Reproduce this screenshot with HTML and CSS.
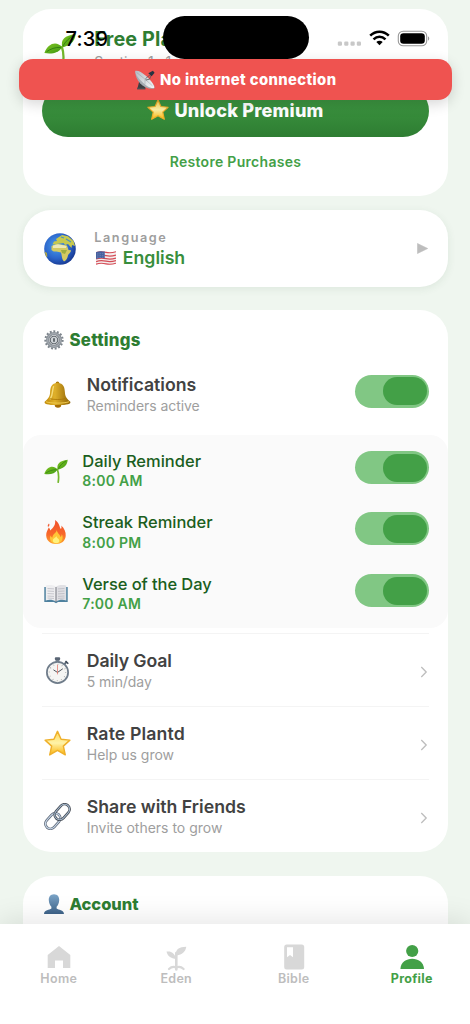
FILE: index.html
```html
<!DOCTYPE html>
<html lang="en">
<head>
<meta charset="utf-8">
<title>Profile</title>
<link rel="stylesheet" href="styles.css">
</head>
<body>
<svg class="defs" width="0" height="0" aria-hidden="true">
  <defs>
    <linearGradient id="gLeaf" x1="0" y1="0" x2="1" y2="1"><stop offset="0" stop-color="#80c41f"/><stop offset="1" stop-color="#3f9a17"/></linearGradient>
    <linearGradient id="gStar" x1="0" y1="0" x2="0" y2="1"><stop offset="0" stop-color="#ffd95a"/><stop offset=".5" stop-color="#fff3a8"/><stop offset="1" stop-color="#fbb40c"/></linearGradient>
    <linearGradient id="gBell" x1="0" y1="0" x2="1" y2="0"><stop offset="0" stop-color="#c08a08"/><stop offset=".4" stop-color="#dfb02a"/><stop offset="1" stop-color="#8f6204"/></linearGradient>
    <linearGradient id="gBust" x1="0" y1="0" x2="0" y2="1"><stop offset="0" stop-color="#7ca5c8"/><stop offset="1" stop-color="#3d6288"/></linearGradient>
    <radialGradient id="gSea" cx=".4" cy=".4" r=".65"><stop offset="0" stop-color="#4aa0ec"/><stop offset=".6" stop-color="#2c66cc"/><stop offset="1" stop-color="#17378f"/></radialGradient>
    <linearGradient id="gFire" x1="0" y1="0" x2="0" y2="1"><stop offset="0" stop-color="#f0502c"/><stop offset=".6" stop-color="#f8682a"/><stop offset="1" stop-color="#ffa52e"/></linearGradient>
    <linearGradient id="gDish" x1="0" y1="0" x2="1" y2="1"><stop offset="0" stop-color="#b5bcc3"/><stop offset="1" stop-color="#f4f6f7"/></linearGradient>
    <symbol id="sprout" viewBox="0 0 24 24">
      <path d="M14.2 23.2C15 18 14.6 13.8 13.4 10.500" fill="none" stroke="#74b72c" stroke-width="1.7" stroke-linecap="round"/>
      <path d="M13.700 10.800C12.300 4.800 15.500 2 23.700 .8C23.200 7.500 18.500 9.500 13.700 10.800Z" fill="url(#gLeaf)"/>
      <path d="M13.500 10.600C9.500 5.600 2.800 7.600 .3 15C5.800 16 11 15 13.500 10.600Z" fill="url(#gLeaf)"/>
      <path d="M14.200 9.800C16 6.500 19 3.500 22 2M12.600 10.800C8.500 10.500 4.800 12 2 14" fill="none" stroke="#317d12" stroke-width=".7"/>
    </symbol>
    <symbol id="star" viewBox="0 0 24 24">
      <path d="M12 1.200L15.200 8.200L23 9L17.200 14.300L18.900 22.100L12 18.200L5.100 22.100L6.800 14.300L1 9L8.800 8.200Z" fill="url(#gStar)" stroke="#efb02a" stroke-width="1.300" stroke-linejoin="round"/>
    </symbol>
    <symbol id="dish" viewBox="0 0 24 24">
      <path d="M5.500 12L3 22H12.500L10.500 15Z" fill="#3b3e42"/>
      <path d="M2.500 22.300H12.500" stroke="#4b4e52" stroke-width="2"/>
      <path d="M.6 1C-1 9 8 23.500 22.500 22.500C24 21.500 23.500 19.500 22.500 18Z" fill="#a5acb2"/>
      <path d="M.6 1C3.500 .2 8 2.500 13 6.800C19 12 23.500 18 23 21.300C19 22.800 13 18.500 8.500 14C3 8.800 -.5 3.300 .6 1Z" fill="url(#gDish)"/>
      <path d="M2 3L12 11L21 19M12 11L12 17" fill="none" stroke="#8b9298" stroke-width=".5"/>
      <path d="M12.500 10.500L19.500 4.500M13 12L17.500 11L19.500 6" fill="none" stroke="#4b5157" stroke-width=".9"/>
      <path d="M16 3.800L21.500 .8L23.500 3.200L20 7.500Z" fill="#263341"/>
    </symbol>
    <symbol id="globe" viewBox="0 0 32 32">
      <circle cx="16" cy="16" r="15.800" fill="url(#gSea)"/>
      <path d="M8.500 11.500L10 8.500L13 8L12 6L15 4L18 2L24 3.200L29.500 8L31 13L28 12L27.500 15L24 11L21 12L19.500 10L16 10.500Z" fill="#c7c94d"/>
      <path d="M7.500 13L12 11L17 11.500L23 12.500L24.500 17L27 17.300C27 20 23.800 21.200 23.800 23C23.500 25.500 21.500 28.500 19.800 28.300C17.600 26 18 22.500 17 19.500C14.600 18.200 10 19.800 7.500 17Z" fill="#d4ca62"/>
      <path d="M9 12.500L14 11.300L22.500 13L22 15L9 15Z" fill="#ece8b7"/>
      <path d="M17 17L23 17L21 21L18 20Z" fill="#9eae40"/>
      <path d="M.6 18.500L3 20L3.300 24L2 23.500Z" fill="#b3a844"/>
      <path d="M17 4L20 5M22 6L27 9" stroke="#4c93bd" stroke-width="1.300"/>
    </symbol>
    <symbol id="flag" viewBox="0 0 20 14">
      <path d="M0 1.200C4 -.3 7 .1 10 .8S16 1.500 20 .2V12.500C16 13.800 13 13.500 10 12.800S4 12.200 0 13.800Z" fill="#f4eeee"/>
      <path d="M0 1.700C4 .2 7 .6 10 1.300S16 2 20 .7M0 5C4 3.500 7 3.900 10 4.600S16 5.300 20 4M0 8C4 6.500 7 6.900 10 7.600S16 8.300 20 7M0 10.600C4 9.100 7 9.500 10 10.200S16 10.900 20 9.600M0 13.200C4 11.700 7 12.100 10 12.800S16 13.500 20 12.200" fill="none" stroke="#d44b55" stroke-width="1.200"/>
      <path d="M0 1.200C4 -.3 6 .1 8.800 .6V7.400C6 6.800 3 6.800 0 8Z" fill="#46609f"/>
      <path d="M1 3L8.500 2.200M1 5L8.500 4.200M1 6.800L8.500 6" stroke="#aab6d6" stroke-width=".5" stroke-dasharray=".7 1"/>
    </symbol>
    <symbol id="gear" viewBox="0 0 24 24">
      <circle cx="12" cy="12" r="10.300" fill="none" stroke="#7d858c" stroke-width="2.600" stroke-dasharray="2.300 2.014"/>
      <circle cx="12" cy="12" r="7.600" fill="none" stroke="#8b9299" stroke-width="4"/>
      <circle cx="12" cy="12" r="7.700" fill="none" stroke="#afb5ba" stroke-width="1"/>
      <circle cx="12" cy="12" r="4.500" fill="#cfd4d8" stroke="#61686e" stroke-width="1.400"/>
      <path d="M12 10.500V13.500" stroke="#50575d" stroke-width="2" stroke-linecap="round"/>
    </symbol>
    <symbol id="bell" viewBox="0 0 28 28">
      <circle cx="14" cy="2.400" r="1.900" fill="#b07c08"/>
      <ellipse cx="14.500" cy="25" rx="3.400" ry="2.800" fill="#a66d06"/>
      <path d="M14 2.200C20.500 2.200 21.400 7 21.700 12C22 17 24 18.500 27.300 21.500C28 23.600 25 25 14 25S0 23.600 .7 21.500C4 18.500 6 17 6.300 12C6.600 7 7.500 2.200 14 2.200Z" fill="url(#gBell)"/>
      <path d="M9.800 6C8.600 9 9.300 14.500 6.600 18.500" fill="none" stroke="#f5db78" stroke-width="1.500" stroke-linecap="round"/>
      <path d="M2 21.500C7 23.400 21 23.400 26 21.500" fill="none" stroke="#f0cc50" stroke-width="1"/>
      <path d="M6 18.300C10 19.500 18 19.500 22 18.300" fill="none" stroke="#a67305" stroke-width=".8"/>
    </symbol>
    <symbol id="fire" viewBox="0 0 20 24">
      <path d="M9 0C14 3 13 7 15 9C15.800 7.800 15.500 6.500 15.200 5.500C18.500 8.500 20 12 19.700 16C19.300 21 15.500 24 10 24S.5 21 .2 15.500C0 12 2 9.500 2.800 7.500C3.800 8.500 4 9.500 4.300 10.500C7.500 7.500 10 4.500 9 0Z" fill="url(#gFire)"/>
      <path d="M3 3.500C4 5 3.200 6 2 7C1.300 5.500 2 4.500 3 3.500Z" fill="#f25b34"/>
      <path d="M11 9.500C10.500 13 14 14 14.500 17C15.500 16.500 15.800 15 15.700 14C18 18 16 23.300 10.500 23.500C5 23.500 3 19.500 4.500 15.500C5 17 5.800 17.500 6.500 17.500C6.500 14 10.500 13 11 9.500Z" fill="#ffc637"/>
      <path d="M10.500 16C10.500 18.500 13.500 18.500 13.300 21C13 24 7 24 6.800 20.800C6.700 18.500 9.500 18 10.500 16Z" fill="#fff17c"/>
    </symbol>
    <symbol id="book" viewBox="0 0 24 20">
      <path d="M.3 3H23.700V18H14L12 19.300L10 18H.3Z" fill="#4e819f"/>
      <path d="M1.800 1.500C6 .6 10 1 12 3V17.500C9 15.600 5 15.500 1.800 16.400Z" fill="#eeeef0"/>
      <path d="M22.200 1.500C18 .6 14 1 12 3V17.500C15 15.600 19 15.500 22.200 16.400Z" fill="#e0e0e4"/>
      <path d="M12 3V18" stroke="#777981" stroke-width="1"/>
      <path d="M3.500 4.500L10 4.900M3.500 7L10 7.400M3.500 9.500L10 9.900M3.500 12L10 12.400M3.500 14L10 14.400M14 4.900L20.500 4.500M14 7.400L20.500 7M14 9.900L20.500 9.500M14 12.400L20.500 12M14 14.400L20.500 14" stroke="#b4b5bd" stroke-width=".7"/>
    </symbol>
    <symbol id="watch" viewBox="0 0 24 28">
      <rect x="10" y="1.200" width="4" height="5" fill="#7c8793"/>
      <rect x="9.200" y=".3" width="5.600" height="3" rx="1.200" fill="#596574"/>
      <path d="M19 7.500L21.700 5" stroke="#5f6b78" stroke-width="2"/>
      <path d="M20.300 4.200L23.200 7" stroke="#3f4b59" stroke-width="1.600"/>
      <circle cx="12" cy="16" r="11" fill="#f5f5f3" stroke="#6f7c8a" stroke-width="1.800"/>
      <circle cx="12" cy="16" r="8.500" fill="none" stroke="#888" stroke-width="1.200" stroke-dasharray=".6 3.850"/>
      <path d="M12 16L7.800 13.300M12 16L17.500 12.200" stroke="#394047" stroke-width=".9"/>
      <path d="M12 18V8" stroke="#e6776b" stroke-width=".8"/>
    </symbol>
    <symbol id="link" viewBox="0 0 28 28">
      <g fill="none">
        <g transform="rotate(-48 9.200 18.700)">
          <rect x=".2" y="13.500" width="18" height="10.400" rx="5.200" stroke="#566070" stroke-width="2.700"/>
          <rect x=".2" y="13.500" width="18" height="10.400" rx="5.200" stroke="#c4d3e4" stroke-width="1.300"/>
        </g>
        <g transform="rotate(-48 18.800 9.300)">
          <rect x="9.800" y="4.100" width="18" height="10.400" rx="5.200" stroke="#40464f" stroke-width="2.700"/>
          <rect x="9.800" y="4.100" width="18" height="10.400" rx="5.200" stroke="#a4b8cc" stroke-width="1.100"/>
        </g>
      </g>
    </symbol>
    <symbol id="bust" viewBox="0 0 20 20">
      <path d="M10 .2C13.700 .2 15.400 3 15.200 6.200C15 9.400 13.800 11.500 12.600 12.700V14.500C14.500 16.200 19.800 15.500 20 20H0C.2 15.500 5.500 16.200 7.400 14.500V12.700C6.200 11.500 5 9.400 4.800 6.200C4.600 3 6.300 .2 10 .2Z" fill="url(#gBust)"/>
    </symbol>
    <symbol id="chevron" viewBox="0 0 8 12"><path d="M1.300 1L6.200 6L1.300 11" fill="none" stroke="#bdbdbd" stroke-width="1.300"/></symbol>
  </defs>
</svg>

<div class="screen">
  <main class="content">
    <section class="card plan">
      <div class="plan-head">
        <svg class="plan-icon"><use href="#sprout"/></svg>
        <div>
          <div class="plan-name">Free Plan</div>
          <div class="plan-sub">Section 1 · 1</div>
        </div>
      </div>
      <div class="unlock"><svg class="e22"><use href="#star"/></svg><span>Unlock Premium</span></div>
      <div class="restore">Restore Purchases</div>
    </section>

    <section class="card language">
      <svg class="e32"><use href="#globe"/></svg>
      <div class="lang-text">
        <div class="lang-label">Language</div>
        <div class="lang-value"><svg class="flag"><use href="#flag"/></svg><span>English</span></div>
      </div>
      <svg class="play" viewBox="0 0 11 11"><path d="M.5 .5V10.500L10.700 5.500Z" fill="#bdbdbd" stroke="#bdbdbd" stroke-width=".6" stroke-linejoin="round"/></svg>
    </section>

    <section class="card settings">
      <h2 class="title wide"><svg class="e20"><use href="#gear"/></svg><span>Settings</span></h2>
      <div class="row first">
        <svg class="e27"><use href="#bell"/></svg>
        <div class="text"><div class="name">Notifications</div><div class="desc tight">Reminders active</div></div>
        <div class="toggle"></div>
      </div>
      <div class="reminders">
        <div class="reminder">
          <svg class="e24"><use href="#sprout"/></svg>
          <div class="text"><div class="rname">Daily Reminder</div><div class="rtime">8:00 AM</div></div>
          <div class="toggle"></div>
        </div>
        <div class="reminder">
          <svg class="e24"><use href="#fire"/></svg>
          <div class="text"><div class="rname">Streak Reminder</div><div class="rtime">8:00 PM</div></div>
          <div class="toggle"></div>
        </div>
        <div class="reminder">
          <svg class="e24"><use href="#book"/></svg>
          <div class="text"><div class="rname verse">Verse of the Day</div><div class="rtime">7:00 AM</div></div>
          <div class="toggle"></div>
        </div>
      </div>
      <div class="row">
        <svg class="e27"><use href="#watch"/></svg>
        <div class="text"><div class="name goal">Daily Goal</div><div class="desc tight">5 min/day</div></div>
        <svg class="chev"><use href="#chevron"/></svg>
      </div>
      <div class="row">
        <svg class="e27"><use href="#star"/></svg>
        <div class="text"><div class="name rate">Rate Plantd</div><div class="desc">Help us grow</div></div>
        <svg class="chev"><use href="#chevron"/></svg>
      </div>
      <div class="row">
        <svg class="e27"><use href="#link"/></svg>
        <div class="text"><div class="name">Share with Friends</div><div class="desc">Invite others to grow</div></div>
        <svg class="chev"><use href="#chevron"/></svg>
      </div>
    </section>

    <section class="card account">
      <h2 class="title"><svg class="e20"><use href="#bust"/></svg><span>Account</span></h2>
    </section>
  </main>

  <header class="status">
    <span class="time">7:39</span>
    <div class="island"></div>
    <svg class="signals" viewBox="0 0 94 18">
      <g fill="#c8c8c8"><rect x=".8" y="11.500" width="4.200" height="4.200" rx="1.200"/><rect x="7.200" y="11.500" width="4.200" height="4.200" rx="1.200"/><rect x="13.500" y="11.500" width="4.200" height="4.200" rx="1.200"/><rect x="19.800" y="11.500" width="4.200" height="4.200" rx="1.200"/></g>
      <g fill="none" stroke="#000" stroke-width="2.500"><path d="M33.200 5.700C38.500 .5 46.500 .5 51.800 5.700"/><path d="M36.500 9.400C40.200 5.900 44.800 5.900 48.500 9.400"/></g>
      <path d="M42.500 15.200L39.300 12C41.200 10.400 43.800 10.400 45.700 12Z"/>
      <rect x="61.300" y="1.300" width="28.400" height="14.400" rx="4.800" fill="#fff" stroke="#999" stroke-width="1.100"/>
      <rect x="63.200" y="3.200" width="24.600" height="10.600" rx="3.300"/>
      <path d="M91 6.300C92.700 7 92.700 10 91 10.700Z" fill="#999"/>
    </svg>
  </header>
  <div class="banner"><svg class="dish"><use href="#dish"/></svg><span>No internet connection</span></div>

  <nav class="tabs">
    <div class="tab"><svg class="ticon" viewBox="0 0 28 28"><path d="M14 2L25.300 11V24H18V16.500H10V24H2.700V11Z" fill="#d8d8d8"/></svg><span>Home</span></div>
    <div class="tab"><svg class="ticon" viewBox="0 0 28 28"><g fill="#d8d8d8"><path d="M13.500 12C13.500 5 17 2.800 24.300 2.700C23.500 8 20 10.500 14.800 11.500Z"/><path d="M14.500 15C12 8.500 9 6.700 4.500 7.600C5.500 12 8.500 14.700 14.500 15Z"/></g><path d="M14.300 9V25.500" fill="none" stroke="#d8d8d8" stroke-width="2.600" stroke-linecap="round"/><path d="M7 25C9.500 22.500 12 22.500 14.300 23.500C16.500 22.500 19 22.500 21.600 25" fill="none" stroke="#d8d8d8" stroke-width="2.200" stroke-linecap="round"/></svg><span>Eden</span></div>
    <div class="tab"><svg class="ticon" viewBox="0 0 28 28"><rect x="4.200" y=".6" width="20" height="25" rx="2.500" fill="#d8d8d8"/><path d="M7 3.200H13V13.200L10 11L7 13.200Z" fill="#fff"/></svg><span>Bible</span></div>
    <div class="tab active"><svg class="ticon" viewBox="0 0 28 28"><circle cx="14.200" cy="7" r="6.100" fill="#43a047"/><path d="M2.400 25.100C2.700 11.200 25.700 11.200 26 25.100Z" fill="#43a047"/></svg><span>Profile</span></div>
  </nav>
</div>
</body>
</html>
```

FILE: styles.css
```css
* { box-sizing: border-box; }
body { margin: 0; background: #eff6ef; font-family: Inter, sans-serif; }
.defs { position: absolute; }
svg { display: block; flex: none; }

.screen { position: relative; width: 470px; height: 1024px; overflow: hidden; background: #eff6ef; }
.content { display: flex; flex-direction: column; padding: 9px 22.300px 0 23.300px; }
.card { background: #fff; border-radius: 28px; padding: 0 19px; flex: none; }

.plan { height: 187px; padding-top: 13px; display: flex; flex-direction: column; }
.plan-head { display: flex; height: 54px; padding-top: 3px; flex: none; }
.plan-icon { width: 32px; height: 32px; margin: 8px 18px 0 2px; }
.plan-name { font-size: 19.800px; font-weight: 700; line-height: 24px; color: #2e7d32; margin-top: 1.700px; letter-spacing: .15px; }
.plan-sub { font-size: 14px; line-height: 18px; color: #9e9e9e; margin-top: 2px; }
.unlock { height: 52px; margin-top: 9px; border-radius: 27px; background: linear-gradient(#43a047, #388e3c 50%, #2e7d32); display: flex; align-items: center; justify-content: center; gap: 5px; color: #fff; font-size: 18.100px; font-weight: 800; letter-spacing: .2px; flex: none; padding-bottom: 3px; }
.e22 { width: 22px; height: 22px; }
.restore { margin-top: 15px; text-align: center; font-size: 14px; line-height: 20px; font-weight: 600; color: #43a047; letter-spacing: .3px; }

.language { height: 77px; margin-top: 14px; display: flex; align-items: center; padding-left: 20.800px; box-shadow: 0 2px 9px rgba(46, 90, 50, .09); }
.e32 { width: 32px; height: 32px; }
.lang-text { flex: 1; margin-left: 18.200px; padding-top: 2.500px; }
.lang-label { font-size: 12.700px; font-weight: 600; line-height: 16px; letter-spacing: 1.550px; color: #9e9e9e; }
.lang-value { display: flex; align-items: center; gap: 6.500px; font-size: 17.700px; font-weight: 600; line-height: 24px; color: #388e3c; }
.flag { width: 20px; height: 14px; margin-left: 2px; }
.play { width: 11px; height: 11px; margin-right: 1px; }

.settings { height: 542px; margin-top: 23.300px; }
.title { margin: 0; padding: 17.500px 0 0 1.700px; height: 40px; display: flex; align-items: center; gap: 5.500px; font-size: 16.500px; line-height: 20px; font-weight: 800; color: #2e7d32; letter-spacing: -.05px; }
.title.wide { font-size: 16.800px; letter-spacing: .25px; padding-top: 18.500px; }
.e20 { width: 20px; height: 20px; }
.row { display: flex; align-items: center; height: 73px; border-top: 1.500px solid #f4f4f4; }
.row.first { border: 0; height: 80px; margin-top: 4.500px; padding-bottom: 7px; }
.row .text { padding-top: 2px; }
.first .text { padding-top: 7px; }
.e27 { width: 27px; height: 27px; margin-left: 1.700px; margin-top: 2px; }
.first .e27 { margin-top: 6px; }
.text { flex: 1; margin-left: 15.800px; }
.name { font-size: 17.700px; line-height: 22px; font-weight: 600; color: #424242; }
.name.goal { letter-spacing: -.12px; }
.name.rate { letter-spacing: .12px; }
.desc { font-size: 14px; line-height: 19px; color: #9e9e9e; }
.desc.tight { letter-spacing: -.06px; }
.toggle { width: 74px; height: 33px; border-radius: 17px; background: #81c784; padding: 2px 2px; display: flex; justify-content: flex-end; }
.toggle::before { content: ""; width: 44px; height: 28px; border-radius: 14px; background: #43a047; }
.reminder .toggle { padding-top: 3px; }
.reminders { margin: 0 -19px 4.500px; background: #fafafa; border-radius: 18px; padding: 2px 19px 7px; height: 193.500px; }
.reminder { display: flex; align-items: center; height: 61.400px; }
.e24 { width: 24px; height: 24px; margin-left: 1.700px; }
.reminder .text { margin-left: 14.300px; padding-top: 6px; }
.reminder .e24 { margin-top: 7px; }
.rname { font-size: 16.500px; line-height: 20.500px; font-weight: 500; color: #1b5e20; }
.rname.verse { letter-spacing: -.08px; }
.rtime { font-size: 14px; line-height: 19px; font-weight: 600; color: #43a047; letter-spacing: .25px; }
.chev { width: 8px; height: 12px; margin-right: 1px; margin-top: 4px; }

.account { height: 160px; margin-top: 23.300px; }

.status { position: absolute; inset: 0 0 auto 0; height: 60px; }
.time { position: absolute; left: 65.500px; top: 26.500px; font-size: 20px; line-height: 24px; font-weight: 500; color: #000; letter-spacing: .2px; }
.island { position: absolute; left: 162.500px; top: 16px; width: 146.500px; height: 43px; border-radius: 22px; background: #000; }
.signals { position: absolute; left: 336.500px; top: 29.500px; width: 94px; height: 18px; }

.banner { position: absolute; left: 19px; top: 58.500px; width: 433px; height: 41.500px; border-radius: 14px; background: #ef5350; box-shadow: 0 4px 14px rgba(0, 0, 0, .16); display: flex; align-items: center; justify-content: center; gap: 5.500px; color: #fff; font-size: 14.800px; font-weight: 800; letter-spacing: .38px; padding-top: 1.500px; }
.dish { width: 20px; height: 20px; }

.tabs { position: absolute; left: 0; bottom: 0; width: 470px; height: 100px; background: #fff; display: flex; padding: 0 0; box-shadow: 0 -4px 26px rgba(0, 0, 0, .1); }
.tab { width: 117.800px; padding-top: 19.500px; display: flex; flex-direction: column; align-items: center; font-size: 12.500px; line-height: 16px; font-weight: 600; color: #bdbdbd; letter-spacing: .3px; }
.ticon { width: 28px; height: 28px; }
.tab .ticon { margin-bottom: -1px; }
.tab.active { color: #43a047; font-weight: 700; padding-left: 1px; }
```
